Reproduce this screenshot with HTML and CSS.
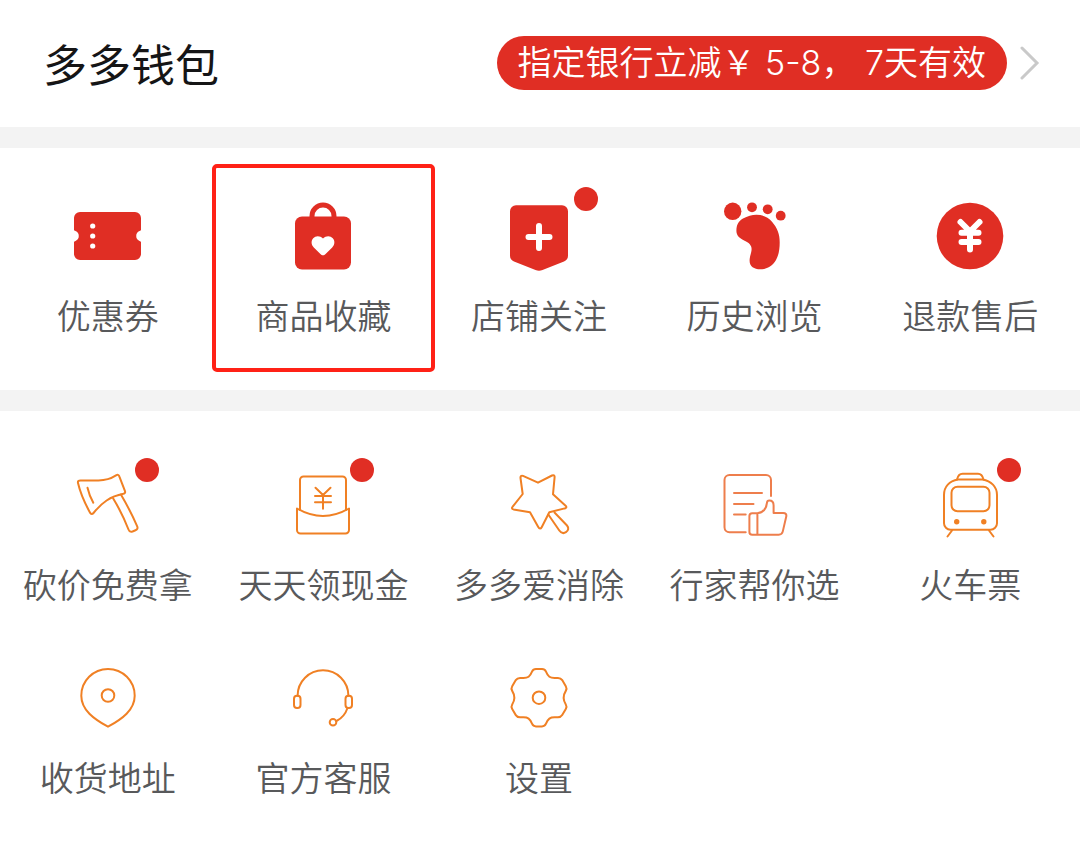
FILE: index.html
```html
<!DOCTYPE html>
<html lang="zh-CN">
<head>
    <meta charset="UTF-8">
    <meta name="viewport" content="width=device-width, initial-scale=1.0">
    <title>个人中心</title>
    <link rel="stylesheet" href="styles.css">
</head>
<body>

    <!-- Wallet -->
    <header class="wallet">
        <h1 class="wallet-title">多多钱包</h1>
        <a class="wallet-link" href="#">
            <span class="promo">指定银行立减￥ 5-8， 7天有效</span>
            <svg class="chevron" viewBox="0 0 20 36" aria-hidden="true"><path d="M2 3l15 15L2 33"/></svg>
        </a>
    </header>

    <!-- Main shortcuts -->
    <nav class="menu menu-main">
        <a class="item" href="#">
            <span class="icon">
                <svg viewBox="0 0 72 72">
                    <path class="fill" d="M8 12h55a6 6 0 0 1 6 6v11.500c0 1-.6 1.300-1.500 1.600a5.300 5.300 0 0 0 0 9.800c.9.300 1.500.6 1.500 1.600V54a6 6 0 0 1-6 6H8a6 6 0 0 1-6-6V42.500c0-1 .6-1.300 1.500-1.600a5.300 5.300 0 0 0 0-9.800C2.600 30.800 2 30.500 2 29.500V18a6 6 0 0 1 6-6z"/>
                    <circle class="hole" cx="20.700" cy="26" r="2.600"/>
                    <circle class="hole" cx="20.700" cy="36" r="2.600"/>
                    <circle class="hole" cx="20.700" cy="46" r="2.600"/>
                </svg>
            </span>
            <span class="label">优惠券</span>
        </a>
        <a class="item item-selected" href="#">
            <span class="icon">
                <svg viewBox="0 0 72 72">
                    <path class="handle" d="M25 19v-3a11 11 0 0 1 22 0v3"/>
                    <rect class="fill" x="8" y="16.500" width="56" height="53" rx="7"/>
                    <path class="hole" d="M36 55.300c-1 0-1.800-.6-2.600-1.300l-6.600-6.600c-2.800-2.900-2.800-6.800-.6-9.200 2.600-2.800 6.800-2.800 9.800.4 3-3.200 7.200-3.200 9.800-.4 2.200 2.400 2.200 6.300-.6 9.200L38.600 54c-.8.700-1.600 1.300-2.600 1.300z"/>
                </svg>
            </span>
            <span class="label">商品收藏</span>
        </a>
        <a class="item" href="#">
            <span class="icon">
                <svg viewBox="0 0 72 72">
                    <path class="fill" d="M13 5.300h46a6 6 0 0 1 6 6v44.500c0 2.800-1.500 4.700-4 5.700l-21.500 8.500q-3.500 1.400-7 0L11 61.500c-2.500-1-4-2.900-4-5.700V11.300a6 6 0 0 1 6-6z"/>
                    <path class="mark" d="M36 26v22M25.500 37h21"/>
                </svg>
                <i class="dot"></i>
            </span>
            <span class="label">店铺关注</span>
        </a>
        <a class="item" href="#">
            <span class="icon">
                <svg viewBox="0 0 72 72">
                    <circle class="fill" cx="13.700" cy="11.300" r="8.700"/>
                    <circle class="fill" cx="33" cy="7.300" r="4.900"/>
                    <circle class="fill" cx="48.700" cy="9.300" r="4.900"/>
                    <circle class="fill" cx="61.700" cy="15.700" r="4.900"/>
                    <path class="fill" d="M17.400 31c0-6 2-10 6.600-12.500 4.500-2.500 9-3.800 13.400-3.800 6 0 11.600 2.300 15.600 7 5.500 6.500 7.700 12.500 7.700 20.500 0 7-1 13-3.700 17.800-3.500 6-9 9.300-15.600 9.300-6.400 0-10.800-3-10.800-8.600 0-4.500 2-8 2-11.700 0-4-3-6.500-7-8.300-5-2.300-8.200-5.200-8.200-9.700z"/>
                </svg>
            </span>
            <span class="label">历史浏览</span>
        </a>
        <a class="item" href="#">
            <span class="icon">
                <svg viewBox="0 0 72 72">
                    <circle class="fill" cx="36" cy="36" r="33.300"/>
                    <path class="mark" d="M26.500 22L36 31.500 45.500 22M27.500 32.700h17M27.500 42h17M36 32v17.500"/>
                </svg>
            </span>
            <span class="label">退款售后</span>
        </a>
    </nav>

    <!-- More services -->
    <nav class="menu menu-more">
        <a class="item" href="#">
            <span class="icon">
                <svg class="line" viewBox="0 0 72 72">
                    <path d="M8.500 11.400h18c7 0 12-1.400 17.500-5 1.600-1 2.700-.7 3.300 1l5.600 14.500c.6 1.600.1 2.500-1.500 2.900C38 27.500 30 33.500 21.500 44c-1.200 1.500-2.600 1.400-3.400-.2C12.500 33.500 8.500 25 6 14c-.4-1.800.6-2.600 2.500-2.600z"/>
                    <path d="M15.500 18.700q1.800 8 5.800 15"/>
                    <path d="M41.200 29.500c5.500 9 11 20 15.300 31 .7 2 2 2.700 4 2l3-1.200c2-.8 2.500-2.200 1.600-4.200-4.300-10-10-21-16.200-31.600"/>
                </svg>
                <i class="dot"></i>
            </span>
            <span class="label">砍价免费拿</span>
        </a>
        <a class="item" href="#">
            <span class="icon">
                <svg class="line" viewBox="0 0 72 72">
                    <path d="M13 41V11a3.500 3.500 0 0 1 3.500-3.500h39A3.500 3.500 0 0 1 59 11v30"/>
                    <path d="M10 39.500q26 15 52 0V61a3.500 3.500 0 0 1-3.500 3.500h-45A3.500 3.500 0 0 1 10 61z"/>
                    <path d="M28.500 18.700L36 26l7.500-7.300M28 27h16M28 33.300h16M36 26v13.700"/>
                </svg>
                <i class="dot"></i>
            </span>
            <span class="label">天天领现金</span>
        </a>
        <a class="item" href="#">
            <span class="icon">
                <svg class="line" viewBox="0 0 72 72">
                    <path d="M20 6.900L35 13.700l14-7.200c1.600-.8 2.700-.1 2.600 1.600L50 25.300l12.600 11.400c1.300 1.200.9 2.400-.9 2.700l-15.400 3.800-7.600 15c-.9 1.800-2.500 1.800-3.300 0L27 43.300l-16.500-2.900c-1.700-.4-2-1.600-.8-2.800L19.700 25l-2.200-16c-.2-1.800.8-2.700 2.500-2.100z"/>
                    <path d="M45.300 45.500L56.300 61.500c1.800 2.600 4.300 3.200 6.700 1.700 2.500-1.600 3-4.300 1-6.700L51.500 43.500"/>
                </svg>
            </span>
            <span class="label">多多爱消除</span>
        </a>
        <a class="item" href="#">
            <span class="icon">
                <svg class="line line-coral" viewBox="0 0 72 72">
                    <path d="M26.700 63.300H10.500a5 5 0 0 1-5-5V11a5 5 0 0 1 5-5H47a5 5 0 0 1 5 5v16"/>
                    <path d="M15 24h28M15 35h19.500M15 45.600h11.700"/>
                    <path d="M38.400 44.300v21.400M38.400 44.300h-5.200a2.800 2.800 0 0 0-2.800 2.800v15.800a2.800 2.800 0 0 0 2.800 2.800h26.500c2.300 0 3.600-1 4.100-3.300l3.400-14.600c.6-2.500-.5-3.700-3-3.700h-9.600v-7.700c0-3-1.600-4.900-4.300-4.900-1.500 0-2.200.7-2.300 2.200-.6 6.300-3 9.700-9.600 10.600z"/>
                </svg>
            </span>
            <span class="label">行家帮你选</span>
        </a>
        <a class="item" href="#">
            <span class="icon">
                <svg class="line" viewBox="0 0 72 72">
                    <path d="M23 10.400c1-4 2.500-5.700 5.500-5.700h15.500c3 0 4.500 1.700 5.500 5.700"/>
                    <path d="M24 10.400h24.500C57 12 63 17.500 63 26v28.200a6.500 6.500 0 0 1-6.500 6.500h-40a6.500 6.500 0 0 1-6.500-6.500V26c0-8.500 5.500-14 14-15.600z"/>
                    <rect x="17.500" y="17.700" width="38" height="24.600" rx="6"/>
                    <path d="M18 61.500l-4.500 6M55 61.500l4.500 6"/>
                    <circle class="lamp" cx="22.700" cy="52.700" r="2.700"/>
                    <circle class="lamp" cx="49.800" cy="52.700" r="2.700"/>
                </svg>
                <i class="dot"></i>
            </span>
            <span class="label">火车票</span>
        </a>
        <a class="item" href="#">
            <span class="icon">
                <svg class="line" viewBox="0 0 72 72">
                    <path d="M36 64.700C22 57 9.300 48 9.300 33.700a26.700 26.700 0 0 1 53.400 0C62.700 48 50 57 36 64.700z"/>
                    <circle cx="36" cy="33.500" r="6.300"/>
                </svg>
            </span>
            <span class="label">收货地址</span>
        </a>
        <a class="item" href="#">
            <span class="icon">
                <svg class="line" viewBox="0 0 72 72">
                    <path d="M10.600 33.700a25.400 25.400 0 0 1 50.800 0"/>
                    <rect x="7" y="33.700" width="6.500" height="12.300" rx="3"/>
                    <rect x="58.500" y="33.700" width="6.500" height="12.300" rx="3"/>
                    <path d="M60.500 46q-3 9-11 13"/>
                    <circle cx="46" cy="60.300" r="3.300"/>
                </svg>
            </span>
            <span class="label">官方客服</span>
        </a>
        <a class="item" href="#">
            <span class="icon">
                <svg class="line" viewBox="0 0 72 72">
                    <path d="M33 7h6c2 0 3.200.8 4 2.700 2 5 4 6.300 9 6.200h3c2 0 3.200.6 4.200 2.200l3.600 6.200c1 1.700 1 3 0 4.600-3 4.800-3 8.800 0 13.600 1 1.600 1 2.900 0 4.600l-3.600 6c-1 1.600-2.200 2.200-4.200 2.200h-3c-5-.1-7 1.400-9 6.400-.8 1.900-2 2.700-4 2.700h-6c-2 0-3.200-.8-4-2.700-2-5-4-6.500-9-6.400h-3c-2 0-3.200-.6-4.200-2.200l-3.600-6c-1-1.700-1-3 0-4.600 3-4.800 3-8.800 0-13.600-1-1.600-1-2.900 0-4.600l3.600-6.200c1-1.600 2.200-2.200 4.200-2.200h3c5 .1 7-1.200 9-6.200C29.800 7.800 31 7 33 7z"/>
                    <circle cx="36" cy="35.700" r="6.300"/>
                </svg>
            </span>
            <span class="label">设置</span>
        </a>
    </nav>

</body>
</html>
```
FILE: styles.css
```css
body {
    font-family: "Noto Sans CJK SC", sans-serif;
    font-weight: 350;
    background-color: #fff;
    margin: 0;
    padding: 0;
}
a {
    color: inherit;
    text-decoration: none;
}

/* Wallet */
.wallet {
    display: flex;
    align-items: center;
    justify-content: space-between;
    padding: 36px 40px 37px 43px;
}
.wallet-title {
    margin: 0;
    font-size: 44px;
    line-height: 54px;
    font-weight: 400;
    color: #151516;
}
.wallet-link {
    display: flex;
    align-items: center;
    gap: 13px;
}
.promo {
    padding: 0 21px;
    border-radius: 27px;
    background-color: #e02e24;
    color: #fff;
    font-family: Inter, "Noto Sans CJK SC", sans-serif;
    font-size: 34px;
    line-height: 54px;
    white-space: nowrap;
}
.chevron {
    width: 20px;
    height: 36px;
    fill: none;
    stroke: #c9c9c9;
    stroke-width: 3;
    stroke-linecap: round;
}

/* Shortcut grids */
.menu {
    display: grid;
    grid-template-columns: repeat(5, 1fr);
    row-gap: 58px;
    border-top: 21px solid #f3f3f3;
}
.menu-main {
    padding: 52px 2px 55px 0;
}
.menu-more {
    padding: 58px 2px 44px 0;
}
.item {
    position: relative;
    display: flex;
    flex-direction: column;
    align-items: center;
    gap: 23px;
}
.item-selected::after {
    content: "";
    position: absolute;
    inset: -36px -4px -37px;
    border: 4px solid #ff2116;
    border-radius: 5px;
}
.icon {
    position: relative;
    width: 72px;
    height: 72px;
}
.icon svg {
    display: block;
    width: 72px;
    height: 72px;
}
.label {
    font-size: 34px;
    line-height: 40px;
    color: #58595b;
    white-space: nowrap;
}
.dot {
    position: absolute;
    width: 24px;
    height: 24px;
    border-radius: 50%;
    background-color: #e02e24;
}
.menu-main .dot {
    top: -13px;
    right: -23px;
}
.menu-more .dot {
    top: -11px;
    right: -15px;
}

/* Icons */
.fill {
    fill: #e02e24;
}
.hole {
    fill: #fff;
}
.handle {
    fill: none;
    stroke: #e02e24;
    stroke-width: 5;
}
.mark {
    fill: none;
    stroke: #fff;
    stroke-width: 6;
    stroke-linecap: round;
    stroke-linejoin: round;
}
.line {
    fill: none;
    stroke: #f08024;
    stroke-width: 2;
    stroke-linecap: round;
    stroke-linejoin: round;
}
.line-coral {
    stroke: #ee7e4c;
}
.lamp {
    fill: #f08024;
    stroke: none;
}
```
